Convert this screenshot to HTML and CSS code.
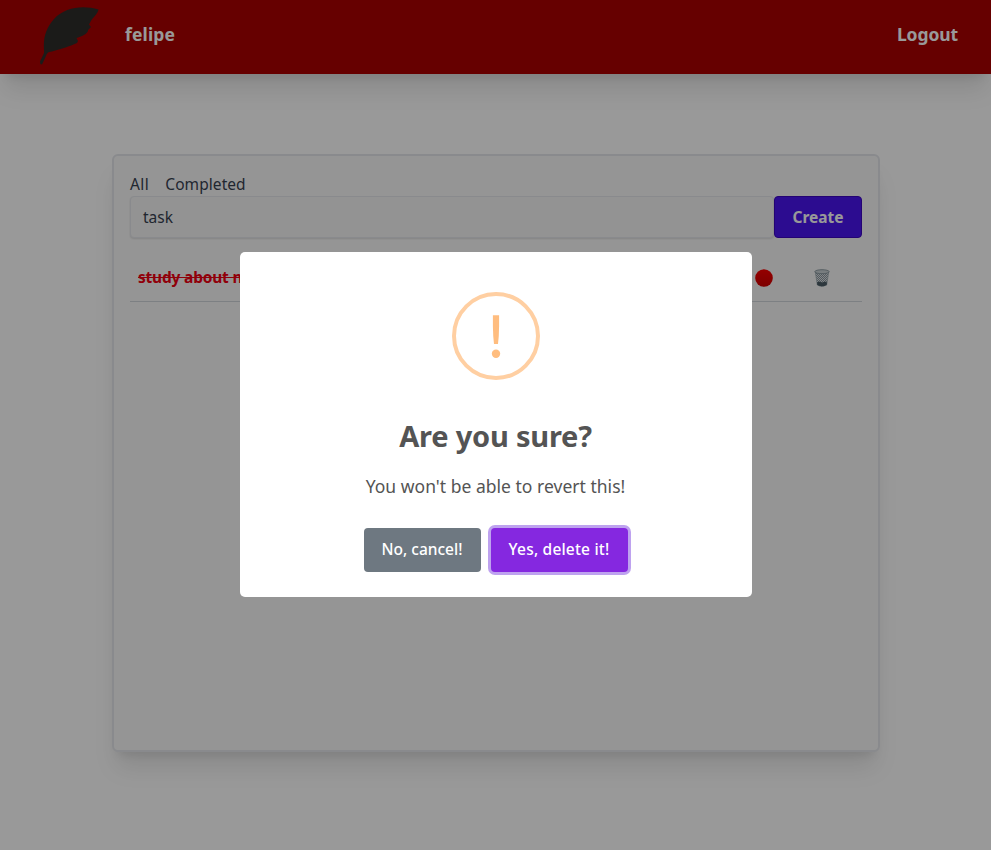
FILE: index.html
```html
<!DOCTYPE html>
<html lang="en">
<head>
<meta charset="utf-8">
<title>Tasks</title>
<link rel="stylesheet" href="styles.css">
</head>
<body>
<header class="navbar">
  <svg class="logo" viewBox="0 0 60 58" aria-hidden="true">
    <path d="M58.500 2.500C43-2 25 0 14 12C6 21 3 31 4 43L4 46L0 54.500L.3 57L2 57.500L6 49C7 46 8 45 12 44.500C21 42 31 39 37 36L38 34L36.500 31C41 30 49 26 48 23L51 20L49 17.500L51.500 13C54 10 58 6 58.500 2.500Z"/>
  </svg>
  <span class="user">felipe</span>
  <a class="logout">Logout</a>
</header>
<main class="card">
  <nav class="filters"><a class="all">All</a><a class="completed">Completed</a></nav>
  <form class="create-form">
    <div class="field"><span>task</span></div>
    <button class="create" type="button"><span>Create</span></button>
  </form>
  <div class="task">
    <span class="task-name">study about next</span>
    <svg class="status" viewBox="0 0 18 18" aria-hidden="true">
      <defs><linearGradient id="red" x1="0" y1="0" x2="0" y2="1"><stop stop-color="#f80000"/><stop offset="1" stop-color="#d00000"/></linearGradient></defs>
      <circle cx="9" cy="9" r="8.8" fill="url(#red)"/>
    </svg>
    <svg class="trash" viewBox="0 0 16 18" aria-hidden="true">
      <defs><pattern id="mesh" width="2" height="2" patternUnits="userSpaceOnUse"><rect width="2" height="2" fill="#dce2e5"/><path d="M0 0h1v1H0zM1 1h1v1H1z" fill="#8a979e"/></pattern></defs>
      <path d="M1.300 3L3.300 16Q8 19 12.700 16L14.700 3Z" fill="url(#mesh)" stroke="#9aa8ae" stroke-width=".7"/>
      <path d="M3 13.500L5 12.500L8 13.500L11 12.500L13 13.500L12.700 16Q8 18.500 3.300 16Z" fill="#4b5d66"/>
      <ellipse cx="8" cy="2.700" rx="7.200" ry="2" fill="#c8d0d4" stroke="#84939b" stroke-width=".9"/>
    </svg>
  </div>
</main>
<div class="backdrop">
  <section class="modal" role="dialog">
    <svg class="warning" viewBox="0 0 88 88" aria-hidden="true">
      <circle cx="44" cy="44" r="42" fill="none" stroke="#ffcfa2" stroke-width="4"/>
      <path d="M40.900 23.200H47.100V34Q47 44 46 52H42Q41 44 40.900 34Z" fill="#ffbd7f"/>
      <circle cx="44" cy="61.800" r="4.200" fill="#ffbd7f"/>
    </svg>
    <h2>Are you sure?</h2>
    <p>You won't be able to revert this!</p>
    <div class="actions">
      <button class="cancel" type="button"><span>No, cancel!</span></button>
      <button class="confirm" type="button"><span>Yes, delete it!</span></button>
    </div>
  </section>
</div>
</body>
</html>
```
FILE: styles.css
```css
* { box-sizing: border-box; }
body {
  margin: 0;
  height: 850px;
  overflow: hidden;
  background: #fff;
  font-family: "Noto Sans", sans-serif;
  font-size: 15.5px;
  line-height: 24px;
  color: #374151;
}
button { font-family: inherit; margin: 0; padding: 0; white-space: nowrap; }
.navbar {
  display: flex;
  align-items: center;
  height: 74px;
  padding: 0 33px 6px 40px;
  background: #a00;
  box-shadow: 0 20px 25px -5px rgba(0,0,0,.1), 0 8px 10px -6px rgba(0,0,0,.1);
  font-size: 17.5px;
  font-weight: 700;
  color: #fff;
}
.logo { width: 60px; height: 58px; margin-top: 4px; fill: #2e2e2a; }
.user { margin-left: 25px; letter-spacing: .15px; }
.logout { margin-left: auto; letter-spacing: -.1px; }
.user, .logout { padding-bottom: 1px; }
.card {
  width: 768px;
  height: 598px;
  margin: 80px auto 0 112px;
  padding: 16px;
  border: 2px solid #e5e7eb;
  border-radius: 6px;
  background: #f9f9f9;
  box-shadow: 0 20px 25px -5px rgba(0,0,0,.1), 0 8px 10px -6px rgba(0,0,0,.1);
}
.filters { display: flex; gap: 16px; height: 24px; }
.all { letter-spacing: .45px; }
.completed { letter-spacing: .07px; }
.create-form { display: flex; height: 42px; }
.field {
  flex: 1;
  padding: 8px 12px;
  border: 1px solid #e5e7eb;
  border-radius: 4px;
  background: #f5f5f5;
  box-shadow: 0 1px 2px rgba(0,0,0,.12);
}
.create {
  width: 88px;
  border: 1px solid #3c06c0;
  border-radius: 4px;
  background: #4a14f0;
  color: #fff;
  font-size: 15.5px;
  font-weight: 700;
}
.task {
  display: flex;
  align-items: center;
  height: 48px;
  margin-top: 16px;
  padding: 0 32px 0 8px;
  border-bottom: 1px solid #d1d5db;
}
.task-name { padding-bottom: 2px; color: #f00012; font-weight: 700; text-decoration: line-through; letter-spacing: -.2px; }
.status { width: 18px; height: 18px; margin: 1px 0 0 auto; }
.trash { width: 16px; height: 18px; margin: 1px 0 0 41px; }
.backdrop {
  position: fixed;
  inset: 0;
  display: flex;
  align-items: center;
  justify-content: center;
  padding-bottom: 1px;
  background: rgba(0,0,0,.4);
}
.modal {
  display: flex;
  flex-direction: column;
  align-items: center;
  width: 512px;
  height: 345px;
  padding-top: 40px;
  border-radius: 5px;
  background: #fff;
  color: #545454;
}
.warning { width: 88px; height: 88px; }
h2 { margin: 33px 0 0; font-size: 29px; line-height: 45px; letter-spacing: -.2px; }
p { margin: 14px 0 0; font-size: 17.5px; line-height: 28px; letter-spacing: .02px; }
.actions { display: flex; gap: 10px; margin-top: 28px; }
.cancel, .confirm {
  height: 44px;
  padding-bottom: 2px;
  border: 0;
  border-radius: 4px;
  color: #fff;
  font-size: 15.5px;
  font-weight: 500;
}
.cancel { width: 117px; background: #6e7881; }
.confirm { width: 137px; background: #8528e0; box-shadow: 0 0 0 3px #bea2ef; letter-spacing: .2px; }
```
